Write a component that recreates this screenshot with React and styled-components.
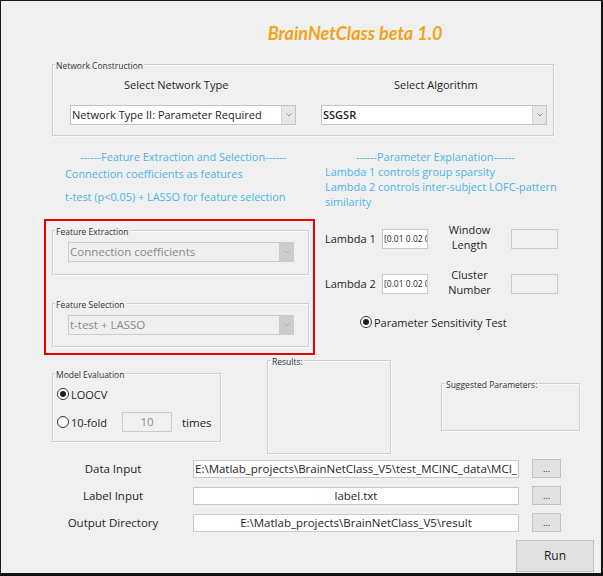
import React from "react";
import styled, { createGlobalStyle, css } from "styled-components";

const GlobalStyle = createGlobalStyle`
  body {
    margin: 0;
    background: #ffffff;
  }
`;

const Window = styled.div`
  width: 603px;
  height: 576px;
  box-sizing: border-box;
  background: #f0f0f0;
  border-top: 1px solid #1a1a1a;
  border-left: 1px solid #1a1a1a;
  border-right: 2px solid #111;
  border-bottom: 3px solid #111;
  font-family: "Open Sans", "Noto Sans", sans-serif;
  color: #1e1e1e;
  display: flex;
  flex-direction: column;
  overflow: hidden;
`;

const Header = styled.div`
  height: 63px;
  display: flex;
  align-items: center;
  justify-content: center;
  padding-left: 108px;
`;

const Title = styled.div`
  font-family: Lato, "Open Sans", sans-serif;
  font-weight: 700;
  font-style: italic;
  font-size: 18px;
  color: #efa416;
`;

const Group = styled.div`
  position: relative;
  box-sizing: border-box;
  width: ${({ $w }) => $w}px;
  height: ${({ $h }) => $h}px;
  margin-top: ${({ $mt = 0 }) => $mt}px;
  margin-left: ${({ $ml = 0 }) => $ml}px;
  border: 1px solid #cfcfcf;
  box-shadow: inset 1px 1px 0 #fbfbfb, 1px 1px 0 #fbfbfb;
  flex-shrink: 0;
`;

const Legend = styled.span`
  position: absolute;
  top: -5px;
  left: ${({ $left = 2 }) => $left}px;
  padding: 0 1px;
  background: #f0f0f0;
  font-size: 8.5px;
  line-height: 11px;
  color: #333;
  white-space: nowrap;
`;

const NetGrid = styled.div`
  display: grid;
  grid-template-columns: 226px 227px;
  column-gap: 25px;
  padding: 12px 0 0 17px;
`;

const NetCol = styled.div`
  display: flex;
  flex-direction: column;
`;

const SelectLabel = styled.div`
  font-size: 11px;
  line-height: 16px;
  padding-left: ${({ $indent }) => $indent}px;
  margin-bottom: 12px;
`;

const Combo = styled.div`
  box-sizing: border-box;
  display: flex;
  width: 226px;
  height: 20px;
  border: 1px solid #c4c4c4;
  background: #ffffff;
  ${({ $disabled }) =>
    $disabled &&
    css`
      border-color: #cccccc;
      background: #efefef;
      color: #8a8a8a;
    `}
  ${({ $inset }) =>
    $inset &&
    css`
      margin: 11px 0 0 15px;
    `}
`;

const ComboText = styled.div`
  flex: 1;
  padding-left: 1px;
  font-size: ${({ $size = 11 }) => $size}px;
  font-weight: ${({ $bold }) => ($bold ? 600 : 400)};
  line-height: 18px;
  white-space: nowrap;
  overflow: hidden;
`;

const ComboArrow = styled.div`
  width: 13px;
  display: flex;
  align-items: center;
  justify-content: center;
  background: ${({ $disabled }) => ($disabled ? "#cccccc" : "#e6e6e6")};
  border-left: 1px solid ${({ $disabled }) => ($disabled ? "#cccccc" : "#d4d4d4")};
`;

const Chevron = ({ color = "#8a8a8a" }) => (
  <svg width="6" height="4" viewBox="0 0 6 4">
    <path d="M0.5 0.5 L3 3 L5.5 0.5" fill="none" stroke={color} strokeWidth="0.9" />
  </svg>
);

const Select = ({ value, disabled, inset, bold, size }) => (
  <Combo $disabled={disabled} $inset={inset}>
    <ComboText $bold={bold} $size={size}>{value}</ComboText>
    <ComboArrow $disabled={disabled}>
      <Chevron color={disabled ? "#a8a8a8" : "#8a8a8a"} />
    </ComboArrow>
  </Combo>
);

const MidRow = styled.div`
  display: flex;
  padding-left: 43px;
  column-gap: 10px;
`;

const LeftCol = styled.div`
  width: 271px;
  display: flex;
  flex-direction: column;
`;

const RightCol = styled.div`
  display: flex;
  flex-direction: column;
`;

const Info = styled.div`
  color: #4db4e8;
  font-size: 10.9px;
  line-height: 15px;
  white-space: nowrap;
  padding-left: ${({ $indent = 0 }) => $indent}px;
  margin-top: ${({ $mt = 0 }) => $mt}px;
`;

const RedBox = styled.div`
  box-sizing: border-box;
  width: 271px;
  height: 136px;
  margin-top: 15px;
  border: 2px solid #e60000;
  padding: 9px 0 0 6px;
  display: flex;
  flex-direction: column;
  row-gap: 28px;
`;

const LambdaGrid = styled.div`
  display: grid;
  grid-template-columns: 57px 46px 83px 47px;
  grid-auto-rows: 20px;
  row-gap: 25px;
  align-items: center;
  margin-top: 20px;
`;

const Label = styled.div`
  font-size: ${({ $size = 11 }) => $size}px;
  line-height: 16px;
  white-space: nowrap;
`;

const TwoLine = styled.div`
  font-size: 11px;
  line-height: 15.5px;
  text-align: center;
  margin-bottom: 4px;
`;

const Edit = styled.div`
  box-sizing: border-box;
  height: ${({ $h = 20 }) => $h}px;
  width: ${({ $w }) => ($w ? `${$w}px` : "auto")};
  border: 1px solid ${({ $disabled }) => ($disabled ? "#cccccc" : "#c8c8c8")};
  background: ${({ $disabled }) => ($disabled ? "#f0f0f0" : "#ffffff")};
  color: ${({ $disabled }) => ($disabled ? "#8a8a8a" : "#1e1e1e")};
  font-size: ${({ $size = 11.5 }) => $size}px;
  line-height: ${({ $h = 20 }) => $h - 2}px;
  text-align: ${({ $align = "left" }) => $align};
  padding: 0 1px;
  white-space: nowrap;
  overflow: hidden;
`;

const RadioRow = styled.div`
  display: flex;
  align-items: center;
  height: ${({ $h = 16 }) => $h}px;
  margin-top: ${({ $mt = 0 }) => $mt}px;
  padding-left: ${({ $indent = 0 }) => $indent}px;
`;

const RadioLabel = styled.div`
  display: flex;
  align-items: center;
  column-gap: 2px;
  width: ${({ $w }) => ($w ? `${$w}px` : "auto")};
  font-size: 11px;
  white-space: nowrap;
`;

const RadioDot = styled.span`
  box-sizing: border-box;
  width: 12px;
  height: 12px;
  border-radius: 50%;
  border: 1px solid #333;
  background: #fff;
  display: flex;
  align-items: center;
  justify-content: center;
  &::after {
    content: "";
    width: 6px;
    height: 6px;
    border-radius: 50%;
    background: ${({ $checked }) => ($checked ? "#1e1e1e" : "transparent")};
  }
`;

const Radio = ({ checked, children, width }) => (
  <RadioLabel $w={width}>
    <RadioDot $checked={checked} />
    {children}
  </RadioLabel>
);

const BottomRow = styled.div`
  display: flex;
  align-items: flex-start;
  padding-left: 51px;
`;

const EvalBody = styled.div`
  display: flex;
  flex-direction: column;
  padding: 12px 0 0 4px;
  row-gap: 10px;
`;

const Times = styled.span`
  font-size: 11.5px;
  margin-left: 10px;
`;

const FileSection = styled.div`
  display: grid;
  grid-template-columns: 160px 326px 42px;
  grid-auto-rows: 19px;
  row-gap: 8px;
  align-items: center;
  margin: 5px 0 0 32px;
`;

const FileLabel = styled.div`
  font-size: 11.5px;
  text-align: center;
  white-space: nowrap;
`;

const Button = styled.div`
  box-sizing: border-box;
  width: ${({ $w }) => $w}px;
  height: ${({ $h }) => $h}px;
  background: #e1e1e1;
  border: 1px solid #c2c2c2;
  display: flex;
  align-items: ${({ $low }) => ($low ? "flex-end" : "center")};
  justify-content: center;
  justify-self: end;
  font-size: ${({ $size = 12 }) => $size}px;
  line-height: 1;
  padding-bottom: ${({ $low }) => ($low ? 4 : 0)}px;
  color: #1e1e1e;
`;

const RunRow = styled.div`
  display: flex;
  justify-content: flex-end;
  padding-right: 7px;
  margin-top: 8px;
`;

export default function App() {
  return (
    <>
      <GlobalStyle />
      <Window>
        <Header>
          <Title>BrainNetClass beta 1.0</Title>
        </Header>

        <Group $w={502} $h={72} $ml={51}>
          <Legend>Network Construction</Legend>
          <NetGrid>
            <NetCol>
              <SelectLabel $indent={54}>Select Network Type</SelectLabel>
              <Select value="Network Type II: Parameter Required" />
            </NetCol>
            <NetCol>
              <SelectLabel $indent={73}>Select Algorithm</SelectLabel>
              <Select value="SSGSR" bold />
            </NetCol>
          </NetGrid>
        </Group>

        <MidRow>
          <LeftCol>
            <Info $indent={36} $mt={13}>------Feature Extraction and Selection------</Info>
            <Info $indent={21} $mt={2}>Connection coefficients as features</Info>
            <Info $indent={21} $mt={8}>t-test (p&lt;0.05) + LASSO for feature selection</Info>
            <RedBox>
              <Group $w={257} $h={45}>
                <Legend>Feature Extraction</Legend>
                <Select value="Connection coefficients" disabled inset size={11.5} />
              </Group>
              <Group $w={257} $h={44}>
                <Legend>Feature Selection</Legend>
                <Select value="t-test + LASSO" disabled inset size={11.5} />
              </Group>
            </RedBox>
          </LeftCol>

          <RightCol>
            <Info $indent={31} $mt={13}>------Parameter Explanation------</Info>
            <Info>Lambda 1 controls group sparsity</Info>
            <Info>Lambda 2 controls inter-subject LOFC-pattern</Info>
            <Info>similarity</Info>
            <LambdaGrid>
              <Label>Lambda 1</Label>
              <Edit $size={8.5}>[0.01 0.02 0.04 0.08]</Edit>
              <TwoLine>Window<br />Length</TwoLine>
              <Edit $disabled />
              <Label>Lambda 2</Label>
              <Edit $size={8.5}>[0.01 0.02 0.04 0.08]</Edit>
              <TwoLine>Cluster<br />Number</TwoLine>
              <Edit $disabled />
            </LambdaGrid>
            <RadioRow $mt={20} $indent={35}>
              <Radio checked>Parameter Sensitivity Test</Radio>
            </RadioRow>
          </RightCol>
        </MidRow>

        <BottomRow>
          <Group $w={169} $h={69} $mt={18}>
            <Legend>Model Evaluation</Legend>
            <EvalBody>
              <RadioRow>
                <Radio checked>LOOCV</Radio>
              </RadioRow>
              <RadioRow $h={20}>
                <Radio width={65}>10-fold</Radio>
                <Edit $w={50} $disabled $align="center">10</Edit>
                <Times>times</Times>
              </RadioRow>
            </EvalBody>
          </Group>
          <Group $w={124} $h={94} $mt={5} $ml={46}>
            <Legend $left={3}>Results:</Legend>
          </Group>
          <Group $w={139} $h={48} $mt={28} $ml={50}>
            <Legend $left={3}>Suggested Parameters:</Legend>
          </Group>
        </BottomRow>

        <FileSection>
          <FileLabel>Data Input</FileLabel>
          <Edit $h={18}>{"E:\\Matlab_projects\\BrainNetClass_V5\\test_MCINC_data\\MCI_NC_data"}</Edit>
          <Button $w={29} $h={19} $size={9} $low>...</Button>
          <FileLabel>Label Input</FileLabel>
          <Edit $h={18} $align="center">label.txt</Edit>
          <Button $w={29} $h={19} $size={9} $low>...</Button>
          <FileLabel>Output Directory</FileLabel>
          <Edit $h={18} $align="center">{"E:\\Matlab_projects\\BrainNetClass_V5\\result"}</Edit>
          <Button $w={29} $h={19} $size={9} $low>...</Button>
        </FileSection>

        <RunRow>
          <Button $w={78} $h={32}>Run</Button>
        </RunRow>
      </Window>
    </>
  );
}
